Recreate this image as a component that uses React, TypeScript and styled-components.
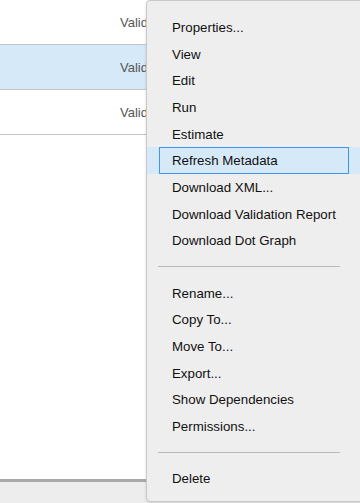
import React from "react";
import styled, { createGlobalStyle } from "styled-components";

const Global = createGlobalStyle`
  html, body { margin: 0; padding: 0; background: #ededed; }
  body { font-family: "Liberation Sans", Arial, sans-serif; overflow: hidden; }
`;

const Page = styled.div`
  position: relative;
  width: 360px;
  height: 503px;
  overflow: hidden;
  background: #ededed;
`;

const Table = styled.div`
  height: 482px;
  background: #ffffff;
  border-bottom: 3px solid #a9a9a9;
  box-sizing: border-box;
  display: flex;
  flex-direction: column;
`;

const Row = styled.div<{ $selected?: boolean }>`
  height: 45px;
  box-sizing: border-box;
  border-bottom: 1px solid #c4c4c4;
  background: ${(p) => (p.$selected ? "#d6e9f8" : "#ffffff")};
  display: flex;
  align-items: center;
  padding-left: 120px;
  padding-top: 1px;
`;

const Status = styled.span`
  font-size: 13px;
  color: #555;
  white-space: nowrap;
`;

const Menu = styled.div`
  position: absolute;
  left: 146px;
  top: 0;
  width: 230px;
  height: 502px;
  box-sizing: border-box;
  background: #eeeeee;
  border: 1px solid #c8c8c8;
  border-radius: 4px;
  box-shadow: 0 1px 3px rgba(0, 0, 0, 0.12);
  padding-top: 13px;
  display: flex;
  flex-direction: column;
`;

const Item = styled.div<{ $active?: boolean }>`
  height: 26.7px;
  box-sizing: border-box;
  display: flex;
  align-items: center;
  padding-left: 25px;
  font-size: 13.3px;
  color: #111;
  white-space: nowrap;
  background: ${(p) => (p.$active ? "#d6e9f8" : "transparent")};
  position: relative;
  &::after {
    content: "";
    display: ${(p) => (p.$active ? "block" : "none")};
    position: absolute;
    left: 12px;
    top: 0;
    width: 190px;
    bottom: 0;
    border: 1px solid #3d97f0;
    box-sizing: border-box;
  }
`;

const Separator = styled.div`
  height: 25.6px;
  display: flex;
  align-items: center;
  padding: 0 10px 0 11px;
  width: 203px;
  box-sizing: border-box;
  &::before {
    content: "";
    flex: 1;
    height: 1px;
    background: #b9b9b9;
  }
`;

const group1 = [
  "Properties...",
  "View",
  "Edit",
  "Run",
  "Estimate",
  "Refresh Metadata",
  "Download XML...",
  "Download Validation Report",
  "Download Dot Graph",
];
const group2 = [
  "Rename...",
  "Copy To...",
  "Move To...",
  "Export...",
  "Show Dependencies",
  "Permissions...",
];

export default function App() {
  return (
    <Page>
      <Global />
      <Table>
        <Row>
          <Status>Valid</Status>
        </Row>
        <Row $selected>
          <Status>Valid</Status>
        </Row>
        <Row>
          <Status>Valid</Status>
        </Row>
      </Table>
      <Menu>
        {group1.map((t) => (
          <Item key={t} $active={t === "Refresh Metadata"}>
            {t}
          </Item>
        ))}
        <Separator />
        {group2.map((t) => (
          <Item key={t}>{t}</Item>
        ))}
        <Separator />
        <Item>Delete</Item>
      </Menu>
    </Page>
  );
}
